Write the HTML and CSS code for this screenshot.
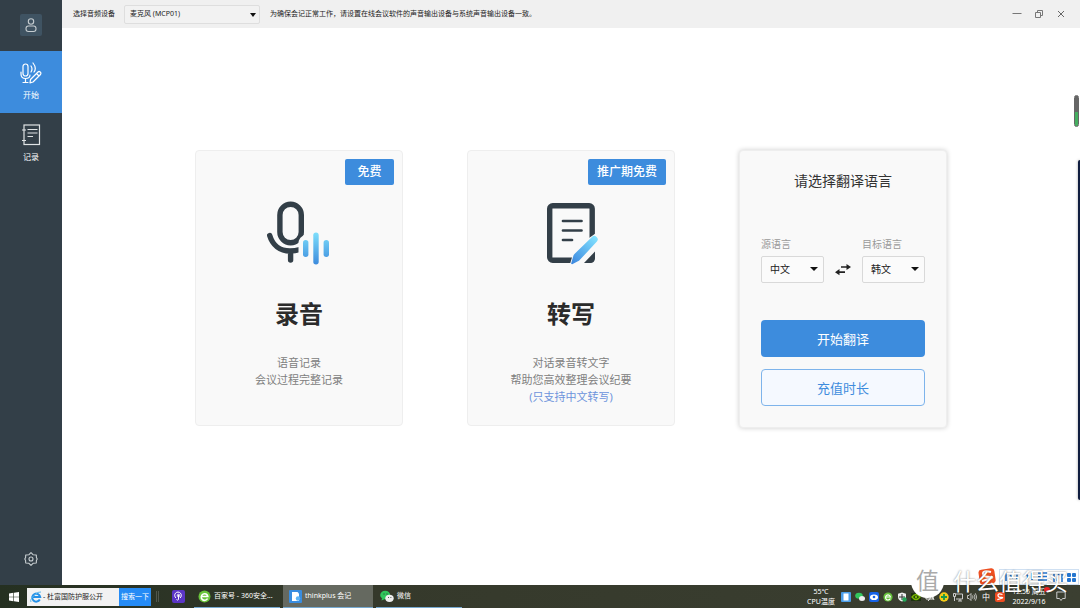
FILE: index.html
```html
<!DOCTYPE html>
<html lang="zh-CN">
<head>
<meta charset="utf-8">
<title>thinkplus 会记</title>
<link rel="stylesheet" href="styles.css">
</head>
<body>
<div class="app">
  <nav class="sidebar">
    <button class="avatar" aria-label="用户">
      <svg width="12" height="15" viewBox="0 0 12 15" fill="none" stroke="#c5ccd0" stroke-width="1.1"><circle cx="6" cy="3.5" r="2.7"/><rect x="1" y="8" width="10" height="5.5" rx="2.4"/></svg>
    </button>
    <button class="nav-item nav-active">
      <svg width="22" height="22" viewBox="0 0 22 22" fill="none" stroke="#fff" stroke-width="1.2" stroke-linecap="round" stroke-linejoin="round"><rect x="3" y="2" width="5" height="12" rx="2.5"/><path d="M1 10v2q0 4.500 4.500 4.500t4.500-3.500M5.500 16.500V20.500M3 20.500h5M11 4q2 3 0 6M13 1q4 5 1 9M10.500 17.500 18 10q1-1 2.200 0t.3 2.500L13 20l-3 .8zM16.500 11.500l2.500 2.500"/></svg>
      <span>开始</span>
    </button>
    <button class="nav-item">
      <svg width="20" height="22" viewBox="0 0 20 22" fill="none" stroke="#dfe3e5" stroke-width="1.2"><rect x="3" y="1" width="15.500" height="19.500"/><path d="M1 6h4M1 16.500h4M6.500 5.500h10M6.500 9h10M6.500 12.500h5.500"/></svg>
      <span>记录</span>
    </button>
    <button class="settings" aria-label="设置">
      <svg width="14" height="14" viewBox="0 0 14 14" fill="none" stroke="#c9cfd2" stroke-width="1.1" stroke-linejoin="round"><path d="M7 .7 9 2.700 12.300 3 12.400 5.500 13.200 7 12.400 8.500 12.300 11 9 11.300 7 13.300 5 11.300 1.700 11 1.600 8.500 .8 7 1.600 5.500 1.700 3 5 2.700z"/><circle cx="7" cy="7" r="2"/></svg>
    </button>
  </nav>

  <div class="content">
    <header class="topbar">
      <label for="device">选择音频设备</label>
      <span class="select device-select"><select id="device"><option>麦克风 (MCP01)</option></select></span>
      <span class="notice">为确保会记正常工作，请设置在线会议软件的声音输出设备与系统声音输出设备一致。</span>
      <div class="window-controls">
        <button aria-label="最小化"><svg width="10" height="10" viewBox="0 0 10 10" stroke="#777" fill="none"><path d="M.5 4.500h9"/></svg></button>
        <button aria-label="还原"><svg width="10" height="10" viewBox="0 0 10 10" stroke="#777" fill="none"><path d="M1.500 3.500h5v5h-5zM3.500 3.500v-2h5v5h-2"/></svg></button>
        <button aria-label="关闭"><svg width="10" height="10" viewBox="0 0 10 10" stroke="#666" fill="none"><path d="M2 2l6 6M8 2 2 8"/></svg></button>
      </div>
    </header>

    <main class="cards">
      <section class="card">
        <span class="badge">免费</span>
        <svg class="card-icon" width="64" height="66" viewBox="1 0 64 66" fill="none">
          <defs><linearGradient id="wave" x1="0" y1="32" x2="0" y2="64" gradientUnits="userSpaceOnUse"><stop stop-color="#7fe0fc"/><stop offset="1" stop-color="#3d8cdd"/></linearGradient></defs>
          <g stroke="#333f48" stroke-width="5.400" stroke-linecap="round"><rect x="13.900" y="4.300" width="21.400" height="38.500" rx="10.700"/><path d="M3.700 35.500C6.500 45 14 51 24 51q5 0 10-1.500M24.600 53v7"/></g>
          <path d="M39 34l-3 2.500q-3.500 2.500-3.500 6.500v13h9V34z" fill="#f9f9f9"/>
          <g fill="url(#wave)"><rect x="37" y="40" width="5.400" height="17" rx="2.700"/><rect x="47.300" y="32.500" width="5.400" height="32" rx="2.700"/><rect x="57.600" y="40" width="5.400" height="17" rx="2.700"/></g>
        </svg>
        <h2>录音</h2>
        <p>语音记录<br>会议过程完整记录</p>
      </section>

      <section class="card">
        <span class="badge">推广期免费</span>
        <svg class="card-icon" width="64" height="66" viewBox="0 0 64 66" fill="none">
          <defs><linearGradient id="pen" x1="57" y1="37" x2="33" y2="63" gradientUnits="userSpaceOnUse"><stop stop-color="#82e2ff"/><stop offset="1" stop-color="#3c88df"/></linearGradient></defs>
          <rect x="10.700" y="5.700" width="42.500" height="54.500" rx="3" stroke="#333f48" stroke-width="5.400"/>
          <path d="M24 21h18.500M24 30.500h18.500M24 40h9" stroke="#333f48" stroke-width="2.700" stroke-linecap="round"/>
          <path d="M50 38l10-7v18L45 64H31l3-10z" fill="#f9f9f9"/>
          <path d="M56 51.500v6.500q0 5-5 5h-6z" fill="#333f48"/>
          <path d="M33.200 64.300q-1.200 0-1-1l2.200-7.500q.3-1.200 1.300-2.100l17.500-17q2-1.800 4.400.3t.3 4.600L40.900 59.800q-.8 1-2 1.500z" fill="url(#pen)"/>
        </svg>
        <h2>转写</h2>
        <p>对话录音转文字<br>帮助您高效整理会议纪要<br><span class="hint">(只支持中文转写)</span></p>
      </section>

      <section class="card translate">
        <h3>请选择翻译语言</h3>
        <div class="languages">
          <div class="field"><label for="from">源语言</label><span class="select"><select id="from"><option>中文</option></select></span></div>
          <button class="swap" aria-label="交换语言"><svg width="16" height="12" viewBox="0 0 16 12" fill="#222"><path d="M6 2.200h5.500V0L16 3l-4.500 3V3.800H6zM10 7.200H4.500V5L0 8.200l4.500 3V9H10z"/></svg></button>
          <div class="field"><label for="to">目标语言</label><span class="select"><select id="to"><option>韩文</option></select></span></div>
        </div>
        <button class="primary">开始翻译</button>
        <button class="secondary">充值时长</button>
      </section>
    </main>
    <div class="meter"></div>
    <div class="edge-panel"></div>
  </div>
</div>

<footer class="taskbar">
  <button class="start" aria-label="开始菜单"><svg width="10" height="10" viewBox="0 0 10 10" fill="#fff"><path d="M0 1.400 4.400.8v3.900H0zM5 .7l5-.7v4.700H5zM0 5.300h4.400v3.900L0 8.600zM5 5.300h5V10l-5-.7z"/></svg></button>
  <form class="search">
    <svg width="12" height="12" viewBox="0 0 12 12" fill="none"><path d="M9.800 8.500A4 4 0 1 1 10.200 6H3" stroke="#2591e8" stroke-width="2"/><path d="M1 11Q-.5 9 4 4.500T11 1" stroke="#5ab8ee"/></svg>
    <input type="text" aria-label="搜索" value="- 杜富国防护服公开">
    <button type="button">搜索一下</button>
  </form>
  <span class="divider"></span>
  <button class="launcher" aria-label="应用"><svg width="13" height="13" viewBox="0 0 13 13" fill="none"><rect width="13" height="13" rx="2" fill="#5b35c6"/><path d="M4 8a3.300 3.300 0 1 1 4 0M6.500 5v4.500a1.300 1.300 0 0 1-2 0" stroke="#fff"/><circle cx="6.500" cy="5.500" r="1.200" stroke="#fff"/></svg></button>
  <button class="task"><svg width="13" height="13" viewBox="0 0 13 13" fill="none"><circle cx="6.500" cy="6.500" r="6" fill="#69c43b"/><path d="M9.500 8.500A3.300 3.300 0 1 1 9.800 6.500H3.500" stroke="#fff" stroke-width="1.600"/></svg><span>百家号 - 360安全...</span></button>
  <button class="task task-current"><svg width="13" height="13" viewBox="0 0 13 13"><rect width="13" height="13" rx="1" fill="#398de0"/><path d="M3 2h5.500l1.500 1.500V11H3z" fill="#fff"/><circle cx="9" cy="8.500" r="2.200" fill="#5db4f5"/></svg><span>thinkplus 会记</span></button>
  <button class="task"><svg width="14" height="13" viewBox="0 0 14 13"><ellipse cx="5.200" cy="5" rx="5" ry="4.300" fill="#2fc65b"/><path d="M2 8l-.5 2.500L5 9z" fill="#2fc65b"/><ellipse cx="9.500" cy="8.300" rx="4.200" ry="3.600" fill="#eee"/><path d="M3.500 4h1M6.500 4h1M8 7.500h.8M10.500 7.500h.8" stroke="#333"/></svg><span>微信</span></button>

  <div class="tray">
    <div class="readout temp"><span>55℃</span><span>CPU温度</span></div>
    <div class="tray-icons">
      <svg viewBox="0 0 10 10"><rect width="10" height="10" rx="1" fill="#4b9de8"/><path d="M2.500 1.500h5v7h-5z" fill="#fff"/></svg>
      <svg viewBox="0 0 10 10"><ellipse cx="4" cy="3.800" rx="3.800" ry="3" fill="#32c85d"/><ellipse cx="7" cy="6.500" rx="3" ry="2.500" fill="#eee"/></svg>
      <svg viewBox="0 0 10 10"><rect width="10" height="10" rx="2" fill="#1763e8"/><ellipse cx="5" cy="5.200" rx="4" ry="2.800" fill="#fff"/><circle cx="5" cy="5" r="1.300" fill="#1763e8"/></svg>
      <svg viewBox="0 0 10 10"><circle cx="5" cy="5" r="4.600" fill="#66c23c"/><path d="M7.300 6.500A2.500 2.500 0 1 1 7.500 5H3" fill="none" stroke="#fff" stroke-width="1.100"/></svg>
      <svg viewBox="0 0 10 10"><path d="M5 .5l4 1.200V5Q9 8 5 9.500 1 8 1 5V1.700z" fill="#eee"/><path d="M5 2v6M2 5h6" stroke="#333"/><circle cx="7.500" cy="7.500" r="2.200" fill="#23a657"/></svg>
      <svg viewBox="0 0 10 10"><rect y="1" width="10" height="8" fill="#1c3210"/><path d="M1 5q4-5 8 0-4 5-8 0z" fill="none" stroke="#79b900" stroke-width="1.300"/><circle cx="5" cy="5" r="1.300" fill="#79b900"/></svg>
      <svg viewBox="0 0 10 10"><path d="M1 2h7v5H1zM3 9l4-5 2 4" fill="none" stroke="#eee"/></svg>
      <svg viewBox="0 0 10 10"><circle cx="5" cy="5" r="4.700" fill="#f6cc16"/><path d="M5 2v6M2 5h6" stroke="#18994b" stroke-width="1.800"/></svg>
      <svg viewBox="0 0 10 10" fill="none" stroke="#ddd" stroke-width=".9"><path d="M3 2h6.500v5H3M5 9h4M7 7v2M.5 1.500h2v3h-2zM1.500 4.500V9"/></svg>
      <svg viewBox="0 0 10 10" fill="none" stroke="#ddd" stroke-width=".8"><path d="M.5 3.500H2L4 1.500v7l-2-2H.5zM5.500 3.500q1 1.500 0 3M7 2.500q2 2.500 0 5M8.300 1.300q3 3.700 0 7.400"/></svg>
      <span class="ime">中</span>
      <svg viewBox="0 0 10 10"><rect width="10" height="10" rx="2" fill="#ee4b20"/><path d="M7.500 2.500Q3 1 3 3.300T6.500 5.500 2.300 7.700" fill="none" stroke="#fff" stroke-width="1.300"/></svg>
    </div>
    <div class="readout clock"><span>12:55 周五</span><span>2022/9/16</span></div>
    <button class="notify" aria-label="通知"><svg width="10" height="11" viewBox="0 0 10 11" fill="none" stroke="#ccc"><path d="M.8 1h8.400v6.500H6.500L5 9.500 3.500 7.500H.8z"/></svg></button>
  </div>
</footer>

<div class="ime-bar">
  <svg width="76" height="14" viewBox="0 0 76 14" fill="none" stroke="#2576cf" stroke-width="1.600"><path d="M4 3v8M8 5l3 3M15 4v5M24 4q3 2 1 6M30 3v7M36 3h9M36 6.500h9M36 10h9M52 3v9M57 3l-2 8M60 2v10"/><g fill="#2576cf" stroke="none"><rect x="65" y="3" width="4" height="4" rx="1"/><rect x="70" y="3" width="4" height="4" rx="1"/><rect x="65" y="8" width="4" height="4" rx="1"/><rect x="70" y="8" width="4" height="4" rx="1"/></g></svg>
</div>
<svg class="sogou" width="18" height="17" viewBox="0 0 18 17"><rect x="1" y="1" width="16" height="15" rx="3" fill="#ee5022" transform="rotate(-8 9 8)"/><path d="M13 4Q5 2 5 5.500T12 9 4 13" fill="none" stroke="#fff" stroke-width="2"/></svg>
<span class="alert-dot"></span>
<div class="watermark"><span class="watermark-logo">值</span><span>什么值得买</span></div>
</body>
</html>
```
FILE: styles.css
```css
* { box-sizing: border-box; }
body {
  margin: 0;
  height: 100vh;
  display: flex;
  flex-direction: column;
  overflow: hidden;
  position: relative;
  background: #fff;
  color: #222;
  font-family: "Noto Sans", "Noto Sans CJK SC", sans-serif;
}
button, select, input { font: inherit; color: inherit; }
button { border: 0; padding: 0; background: none; cursor: pointer; }
svg { display: block; flex: none; }

.app { flex: 1; min-height: 0; display: flex; }
.sidebar {
  width: 62px;
  flex: none;
  display: flex;
  flex-direction: column;
  align-items: center;
  background: #333f48;
  color: #fff;
}
.avatar {
  width: 22px;
  height: 22px;
  margin: 14px 0 15px;
  display: grid;
  place-items: center;
  border-radius: 2px;
  background: #3f5362;
}
.nav-item {
  width: 100%;
  height: 62px;
  display: flex;
  flex-direction: column;
  align-items: center;
  justify-content: center;
  gap: 4px;
  font-size: 8px;
  line-height: 14px;
}
.nav-active { background: #3d8cdd; }
.settings { margin: auto 0 19px; }

.content { flex: 1; min-width: 0; position: relative; }
.topbar {
  height: 28px;
  padding: 0 14px 0 11px;
  display: flex;
  align-items: center;
  background: #f0f0f0;
  font-size: 7px;
  line-height: 12px;
  white-space: nowrap;
}
.select { display: block; position: relative; }
.select select {
  width: 100%;
  height: 27px;
  padding: 0 8px 1px;
  appearance: none;
  border: 1px solid #d9d9d9;
  border-radius: 2px;
  background: #fbfbfb;
}
.select::after {
  content: "";
  position: absolute;
  right: 6px;
  top: 11px;
  border: solid transparent;
  border-width: 4px 4px 0;
  border-top-color: #111;
  pointer-events: none;
}
.device-select { width: 136px; margin: 0 10px 0 9px; }
.device-select select { height: 19px; padding: 0 5px; background: #f2f2f2; border-color: #dedede; }
.device-select::after { border-width: 4px 3px 0; right: 4px; top: 8px; }
.window-controls { margin-left: auto; display: flex; gap: 12px; }
.window-controls button { width: 10px; }

.cards {
  padding: 122px 20px 20px;
  display: flex;
  justify-content: center;
  align-items: flex-start;
  gap: 64px;
}
.card {
  width: 208px;
  min-height: 276px;
  padding: 49px 0 16px;
  position: relative;
  border: 1px solid #eee;
  border-radius: 4px;
  background: #f9f9f9;
  text-align: center;
}
.badge {
  position: absolute;
  top: 8px;
  right: 8px;
  padding: 0 9px;
  min-width: 49px;
  border-radius: 2px;
  background: #3d8cdd;
  color: #fff;
  font-size: 12px;
  font-weight: 500;
  line-height: 26px;
}
.card-icon { margin: 0 auto; }
.card h2 { margin: 30px 0 22px; font-size: 24px; line-height: 36px; font-weight: 700; color: #2b2b2b; }
.card p { margin: 0; font-size: 11px; line-height: 17px; color: #808080; }
.card .hint { color: #6d94dc; }

.translate {
  min-height: 278px;
  padding: 18px 21px 21px;
  box-shadow: 0 0 5px #0003;
}
.translate h3 { margin: 0 0 43px; font-size: 14px; font-weight: 400; line-height: 24px; color: #333; }
.languages { display: flex; justify-content: space-between; align-items: flex-end; margin-bottom: 37px; }
.field { width: 63px; text-align: left; font-size: 10px; }
.field label { display: block; line-height: 16px; margin-bottom: 4px; color: #999; }
.swap { height: 27px; }
.primary, .secondary {
  display: block;
  width: 100%;
  height: 37px;
  border-radius: 4px;
  font-size: 13px;
}
.primary { background: #3d8cdd; color: #fff; margin-bottom: 12px; }
.secondary { background: #f5f9ff; color: #3d8cdd; border: 1px solid #7eb4eb; }

.meter {
  position: absolute;
  top: 95px;
  right: 1px;
  width: 5px;
  height: 32px;
  border-radius: 3px;
  border: 1px solid #666;
  background: linear-gradient(#666 53%, #45ae60 53%);
}
.edge-panel {
  position: absolute;
  top: 160px;
  right: 0;
  width: 2px;
  height: 340px;
  border-radius: 2px 0 0 2px;
  background: #101d3f;
  box-shadow: 0 0 3px #0006;
}

.taskbar {
  height: 23px;
  flex: none;
  display: flex;
  align-items: stretch;
  background: linear-gradient(90deg, #253021, #35392b 35%, #3b3f31);
  color: #fff;
  font-size: 7px;
  line-height: 10px;
  white-space: nowrap;
}
.start { width: 27px; display: grid; place-items: center; }
.search { display: flex; align-items: center; width: 124px; margin: 3px 0 2px; padding-left: 3px; background: #f2f2f2; color: #222; }
.search input { flex: 1; min-width: 0; padding: 0 0 0 1px; border: 0; background: none; }
.search button { width: 32px; align-self: stretch; background: #258bf5; color: #fff; }
.divider { width: 3px; margin: 6px 13px 6px 5px; border: solid #50564b; border-width: 0 1px; }
.launcher { width: 13px; margin-right: 9px; }
.launcher svg { margin: auto; }
.task {
  width: 86px;
  margin-right: 3px;
  padding: 0 4px;
  display: flex;
  align-items: center;
  gap: 3px;
  border-bottom: 1px solid #76a9d0;
}
.task-current { width: 90px; padding-left: 6px; background: #656960; }
.tray { margin-left: auto; display: flex; align-items: center; }
.readout { display: flex; flex-direction: column; align-items: center; }
.temp { width: 40px; }
.clock { width: 48px; }
.tray-icons { display: flex; align-items: center; gap: 4px; }
.tray-icons svg { width: 10px; height: 10px; }
.ime { width: 10px; text-align: center; font-size: 8px; }
.notify { width: 16px; margin-right: 11px; display: grid; place-items: center; }

.ime-bar { position: absolute; right: 1px; bottom: 23px; width: 80px; height: 16px; padding-left: 2px; border: 1px solid #cfe0f2; background: #fff; }
.sogou { position: absolute; right: 84px; bottom: 23px; }
.alert-dot { position: absolute; right: 30px; bottom: 16px; width: 6px; height: 5px; border-radius: 50%; background: #e22; }
.watermark {
  position: absolute;
  right: 12px;
  bottom: 10px;
  display: flex;
  align-items: center;
  gap: 9px;
  color: #fff;
  font-size: 23px;
  line-height: 34px;
  text-shadow: 0 0 2px #0008;
  pointer-events: none;
}
.watermark-logo { width: 33px; height: 33px; border-radius: 50%; background: #fff; color: #aaa; line-height: 31px; text-align: center; text-shadow: none; }
```
